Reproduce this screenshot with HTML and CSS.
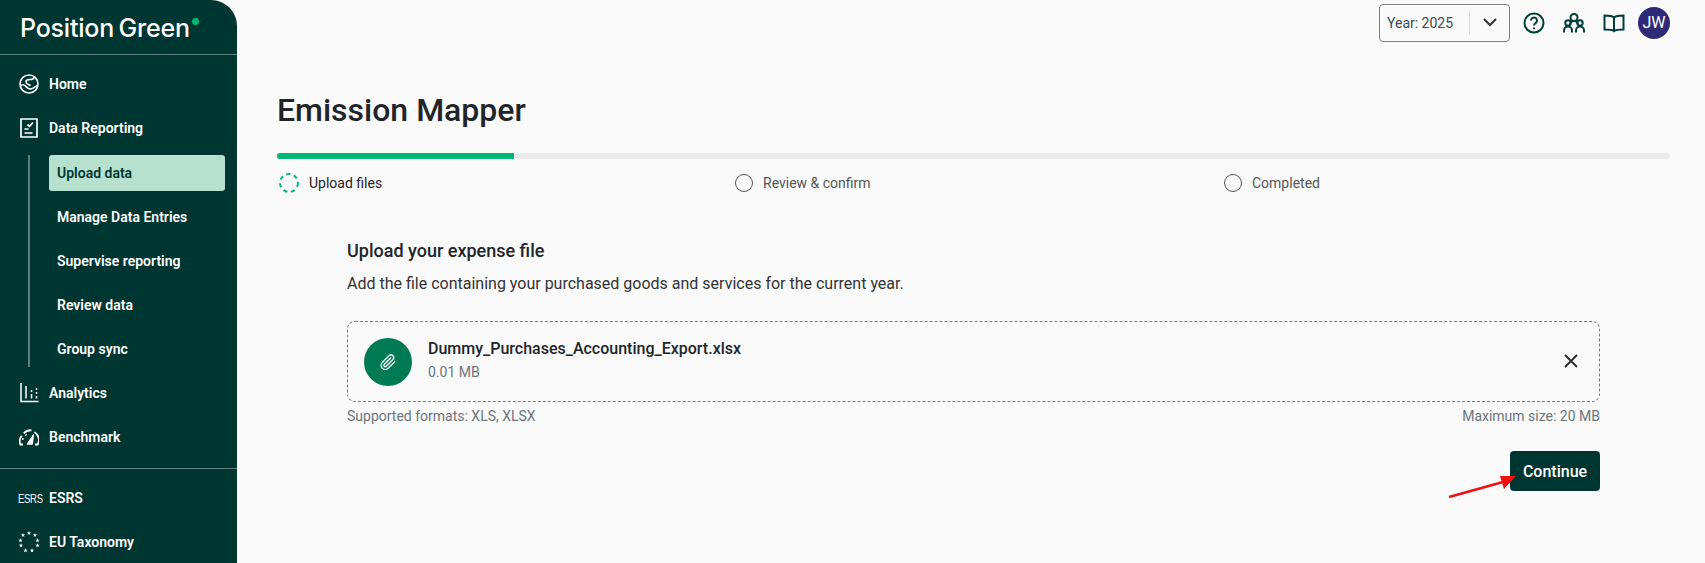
FILE: index.html
```html
<!DOCTYPE html>
<html>
    <head>
        <title>Emission Mapper</title>
        <meta charset="UTF-8">
        <link rel="stylesheet" href="styles.css">
    </head>
    <body>
        <aside class="sidebar">
            <div class="logo"><span>Position Green</span><i class="logo-dot"></i></div>
            <nav class="nav-top">
                <a class="nav-item">
                    <svg class="nav-icon" viewBox="0 0 20 20" fill="none" stroke="#fff" stroke-width="1.6"><circle cx="10" cy="10" r="9"/><path d="M1.500 12c2-2 3.500-1.500 5 0s3 3.500 5.500 3 4-2.500 6.500-3.500"/><path d="M15.500 3c-.5 2-2.500 2.500-4.500 2.500S7 6 7 8s3 2.500 4.500 3.500"/></svg>
                    Home
                </a>
                <a class="nav-item">
                    <svg class="nav-icon icon-report" viewBox="0 0 18 20" fill="none" stroke="#fff" stroke-width="1.7"><path d="M1 1h16v18H1z"/><path d="M7.500 6.500l2 1.800 3.500-3.800M4.500 11h4M4.500 15h8"/></svg>
                    Data Reporting
                </a>
                <div class="subnav">
                    <a class="sub-item active">Upload data</a>
                    <a class="sub-item">Manage Data Entries</a>
                    <a class="sub-item">Supervise reporting</a>
                    <a class="sub-item">Review data</a>
                    <a class="sub-item">Group sync</a>
                </div>
                <a class="nav-item">
                    <svg class="nav-icon" viewBox="0 0 20 20" fill="none" stroke="#fff" stroke-width="1.5"><path d="M2 0v18.500h17.500M7 3v12.500M12.500 7v2M12.500 11v4.500M17.500 5v2M17.500 9v2M17.500 13v2.500"/></svg>
                    Analytics
                </a>
                <a class="nav-item">
                    <svg class="nav-icon" viewBox="0 0 20 20" fill="none" stroke="#fff" stroke-width="1.8"><path d="M4 17.500H1.400a9 9 0 0 1 1.300-8.800M4.800 6.400A9 9 0 0 1 12.500 3.300M15.500 5.200a9 9 0 0 1 3.200 12.300H16"/><path d="M8 17.200L14.500 7.500l-1 9.700z" fill="#fff" stroke-width="1"/><path d="M3 12h1.500M6.500 7.500l1 1"/></svg>
                    Benchmark
                </a>
            </nav>
            <nav class="nav-bottom">
                <a class="nav-item">
                    <span class="esrs-mark">ESRS</span>
                    ESRS
                </a>
                <a class="nav-item">
                    <svg class="nav-icon stars" viewBox="0 0 22 22" fill="#fff">
                        <defs><polygon id="star" points="0,-2.200 .6,-.7 2.100,-.7 .9,.3 1.300,1.800 0,.9 -1.300,1.800 -.9,.3 -2.100,-.7 -.6,-.7"/></defs>
                        <use href="#star" x="11" y="2.200"/><use href="#star" x="5" y="4.200"/><use href="#star" x="17" y="4.200"/>
                        <use href="#star" x="2.500" y="9.500"/><use href="#star" x="19.500" y="9.500"/>
                        <use href="#star" x="3" y="14.500"/><use href="#star" x="19.500" y="14.500"/>
                        <use href="#star" x="7.500" y="19.500"/><use href="#star" x="14" y="19.500"/>
                    </svg>
                    EU Taxonomy
                </a>
            </nav>
        </aside>
        <div class="main">
            <header class="topbar">
                <div class="year-select">
                    <span class="year-label">Year: 2025</span>
                    <span class="year-arrow">
                        <svg width="14" height="9" viewBox="0 0 14 9" fill="none" stroke="#333" stroke-width="2"><path d="M1 1l6 6 6-6"/></svg>
                    </span>
                </div>
                <svg class="top-icon" viewBox="0 0 22 22" fill="none" stroke="#003f38" stroke-width="2"><circle cx="11" cy="11" r="9.500"/><path d="M8 8.500a3 3 0 1 1 4.500 2.600c-1 .6-1.500 1.200-1.500 2.400"/><path d="M11 15.500v1.800"/></svg>
                <svg class="top-icon" viewBox="0 0 22 22" fill="none" stroke="#003f38" stroke-width="2"><circle cx="11" cy="5.500" r="3.500"/><circle cx="5" cy="11" r="2.700"/><circle cx="17" cy="11" r="2.700"/><path d="M1 20.500v-2a4 4 0 0 1 8 0v2M13 20.500v-2a4 4 0 0 1 8 0v2M7 13a4 4 0 0 1 8 0"/></svg>
                <svg class="top-icon" viewBox="0 0 22 22" fill="none" stroke="#003f38" stroke-width="2"><path d="M11 5.500C9.500 4 7 3.500 1.500 3.500v14c5.500 0 8 0 9.500 1.500 1.500-1.500 4-1.500 9.500-1.500v-14C15 3.500 12.500 4 11 5.500zM11 5.500V19"/></svg>
                <div class="avatar">JW</div>
            </header>
            <div class="content">
                <h1 class="title">Emission Mapper</h1>
                <div class="progress"><div class="progress-fill"></div></div>
                <div class="steps">
                    <div class="step step-first">
                        <svg class="step-icon" viewBox="0 0 20 20" fill="none" stroke="#00b873" stroke-width="2" stroke-dasharray="4.200 3.660"><circle cx="10" cy="10" r="9"/></svg>
                        <span class="step-active">Upload files</span>
                    </div>
                    <div class="step step-second"><i class="step-circle"></i>Review &amp; confirm</div>
                    <div class="step"><i class="step-circle"></i>Completed</div>
                </div>
                <section class="upload">
                    <h2 class="upload-title">Upload your expense file</h2>
                    <p class="upload-desc">Add the file containing your purchased goods and services for the current year.</p>
                    <div class="file-box">
                        <div class="file-badge">
                            <svg width="18" height="18" viewBox="0 0 24 24" fill="none" stroke="#fff" stroke-width="1.800" stroke-linecap="round" stroke-linejoin="round"><path d="M21 11.500l-8.800 8.800a5.500 5.500 0 0 1-7.800-7.800l9.200-9.200a3.700 3.700 0 0 1 5.200 5.200l-9.200 9.200a1.800 1.800 0 0 1-2.600-2.600l8.500-8.500"/></svg>
                        </div>
                        <div class="file-info">
                            <div class="file-name">Dummy_Purchases_Accounting_Export.xlsx</div>
                            <div class="file-size">0.01 MB</div>
                        </div>
                        <svg class="file-close" viewBox="0 0 14 14" fill="none" stroke="#2b2b2b" stroke-width="1.800"><path d="M1 1l12 12M13 1L1 13"/></svg>
                    </div>
                    <div class="file-hints">
                        <span>Supported formats: XLS, XLSX</span>
                        <span>Maximum size: 20 MB</span>
                    </div>
                    <div class="actions">
                        <button class="btn-continue">Continue</button>
                    </div>
                </section>
            </div>
        </div>
        <!-- annotation drawn over the screenshot -->
        <svg class="arrow" width="80" height="32" viewBox="0 0 80 32"><path d="M2 28L56 13" stroke="#f01010" stroke-width="2.500"/><path d="M69 7L53 7l4 13z" fill="#f01010"/></svg>
    </body>
</html>
```

FILE: styles.css
```css
* {
    margin: 0;
    padding: 0;
    box-sizing: border-box;
}

html, body {
    height: 563px;
    overflow: hidden;
}

body {
    display: flex;
    position: relative;
    background-color: #fafafa;
    font-family: Roboto, "Liberation Sans", sans-serif;
    color: #212529;
}

.sidebar {
    width: 237px;
    flex-shrink: 0;
    background-color: #003632;
    border-top-right-radius: 26px;
    color: #fff;
}

.logo {
    height: 55px;
    padding: 13px 0 0 20px;
    display: flex;
    align-items: flex-start;
    border-bottom: 1px solid #5f807c;
    font-family: Inter, sans-serif;
    font-size: 25px;
    font-weight: 500;
    line-height: 30px;
    letter-spacing: -0.2px;
    word-spacing: -2px;
}

.logo-dot {
    width: 7px;
    height: 7px;
    margin: 5px 0 0 2px;
    border-radius: 50%;
    background-color: #00b873;
}

.nav-top {
    height: 414px;
    padding-top: 7px;
    border-bottom: 1px solid #5f807c;
}

.nav-bottom {
    padding-top: 7px;
}

.nav-item {
    display: flex;
    align-items: center;
    height: 44px;
    padding-left: 19px;
    font-size: 14px;
    font-weight: 600;
}

.nav-icon {
    width: 20px;
    height: 20px;
    margin-right: 10px;
    flex-shrink: 0;
}

.icon-report {
    width: 18px;
    height: 20px;
    margin: 0 11px 0 1px;
}

.stars {
    width: 22px;
    height: 22px;
    margin: 0 9px 0 -1px;
}

.esrs-mark {
    width: 21px;
    margin: 0 10px 0 -1px;
    font-family: "Liberation Sans", sans-serif;
    font-size: 9.500px;
    font-weight: 400;
    letter-spacing: -0.3px;
    white-space: nowrap;
    transform: scaleY(1.25);
}

.subnav {
    height: 212px;
    margin: 5px 0 4px 28px;
    padding-left: 19px;
    border-left: 2px solid #5f807c;
}

.sub-item {
    display: flex;
    align-items: center;
    width: 176px;
    height: 36px;
    margin-bottom: 8px;
    padding-left: 8px;
    border-radius: 3px;
    font-size: 14px;
    font-weight: 600;
}

.sub-item.active {
    background-color: #b7e0cf;
    color: #003632;
}

.main {
    flex: 1;
    min-width: 0;
}

.topbar {
    display: flex;
    align-items: center;
    justify-content: flex-end;
    height: 42px;
    padding: 3px 35px 0 0;
}

.year-select {
    display: flex;
    align-items: center;
    width: 131px;
    height: 38px;
    margin-right: 13px;
    border: 1px solid #7d7d7d;
    border-radius: 4px;
    font-size: 14px;
    color: #3b4a55;
}

.year-label {
    width: 90px;
    height: 24px;
    padding-left: 7px;
    line-height: 24px;
    border-right: 1px solid #ddd;
}

.year-arrow {
    display: flex;
    flex: 1;
    justify-content: center;
}

.top-icon {
    width: 22px;
    height: 22px;
    margin-right: 18px;
}

.avatar {
    width: 32px;
    height: 32px;
    margin-left: -5px;
    border-radius: 50%;
    background-color: #2f2a78;
    color: #fff;
    font-size: 16px;
    line-height: 32px;
    text-align: center;
}

.content {
    padding: 0 35px 0 40px;
}

.title {
    margin-top: 48px;
    font-size: 32px;
    font-weight: 500;
    line-height: 40px;
}

.progress {
    height: 6px;
    margin-top: 23px;
    border-radius: 3px;
    background-color: #ebebeb;
}

.progress-fill {
    width: 237px;
    height: 6px;
    border-radius: 3px 0 0 3px;
    background-color: #00b873;
}

.steps {
    display: flex;
    align-items: center;
    height: 26px;
    margin-top: 11px;
    font-size: 14px;
    color: #555;
}

.step {
    display: flex;
    align-items: center;
    gap: 10px;
}

.step-first {
    width: 458px;
    padding-left: 2px;
}

.step-second {
    width: 489px;
}

.step-icon {
    width: 20px;
    height: 20px;
}

.step-active {
    color: #212529;
}

.step-circle {
    width: 18px;
    height: 18px;
    border: 1px solid #555;
    border-radius: 50%;
}

.upload {
    margin: 0 70px;
    padding-top: 43px;
}

.upload-title {
    font-size: 18px;
    font-weight: 500;
    line-height: 24px;
}

.upload-desc {
    margin-top: 10px;
    font-size: 16px;
    line-height: 22px;
    color: #333;
}

.file-box {
    display: flex;
    align-items: center;
    height: 81px;
    margin-top: 26px;
    padding: 0 21px 0 16px;
    border: 1px dashed #7d7d7d;
    border-radius: 8px;
}

.file-badge {
    display: flex;
    align-items: center;
    justify-content: center;
    width: 48px;
    height: 48px;
    border-radius: 50%;
    background-color: #007a53;
}

.file-info {
    flex: 1;
    margin: 0 0 3px 16px;
}

.file-name {
    font-size: 16px;
    font-weight: 500;
    line-height: 22px;
}

.file-size {
    margin-top: 2px;
    font-size: 14px;
    line-height: 20px;
    color: #6c757d;
}

.file-close {
    width: 14px;
    height: 14px;
    margin-bottom: 2px;
}

.file-hints {
    display: flex;
    justify-content: space-between;
    height: 20px;
    margin-top: 4px;
    font-size: 14px;
    line-height: 20px;
    color: #6c757d;
}

.actions {
    display: flex;
    justify-content: flex-end;
    margin-top: 25px;
}

.btn-continue {
    width: 90px;
    height: 40px;
    border: none;
    border-radius: 4px;
    background-color: #003632;
    color: #fff;
    font-family: Roboto, sans-serif;
    font-size: 16px;
    font-weight: 500;
}

.arrow {
    position: absolute;
    left: 1447px;
    top: 469px;
}
```
